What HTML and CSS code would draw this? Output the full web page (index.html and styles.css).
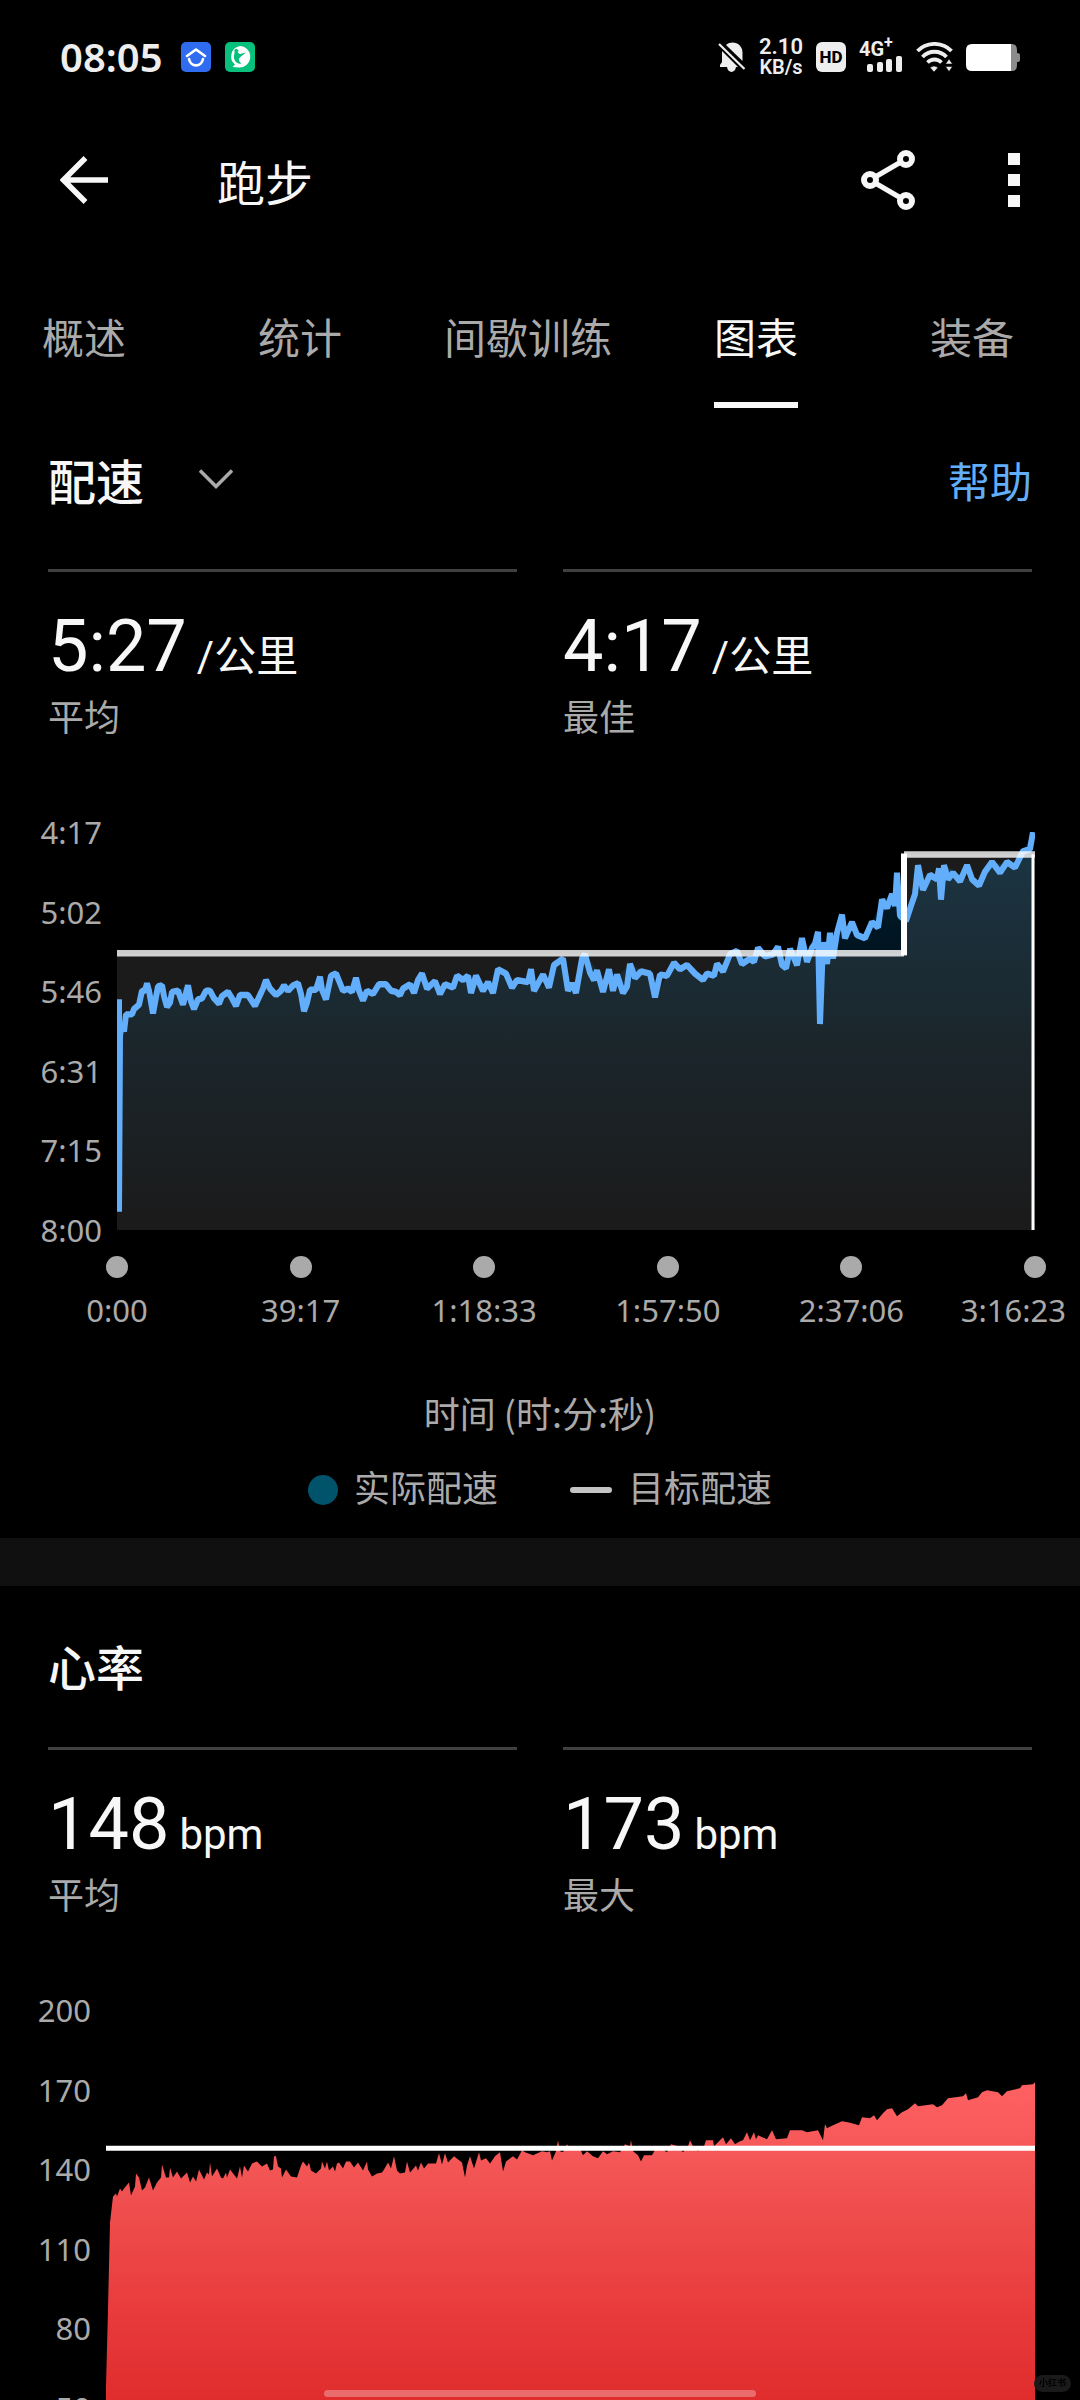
FILE: index.html
```html
<!DOCTYPE html>
<html lang="zh-CN">
<head>
  <meta charset="UTF-8">
  <meta name="viewport" content="width=device-width, initial-scale=1.0">
  <title>跑步</title>
  <link rel="stylesheet" href="styles.css">
</head>
<body>
  <div class="status-bar">
    <span class="clock">08:05</span>
    <svg class="app-icon" viewBox="0 0 30 30" width="30" height="30">
      <rect width="30" height="30" rx="5" fill="#2f6cf0"/>
      <path d="M6 14 L15 7.500 L24 14" fill="none" stroke="#fff" stroke-width="2.600" stroke-linecap="round" stroke-linejoin="round"/>
      <path d="M8 17 C9.500 25.500 20.500 25.500 22 17" fill="none" stroke="#fff" stroke-width="2.600" stroke-linecap="round"/>
    </svg>
    <svg class="app-icon" viewBox="0 0 30 30" width="30" height="30">
      <rect width="30" height="30" rx="5" fill="#06c07c"/>
      <path d="M15 4 A10.500 10.500 0 1 1 14 25.500 L7.500 25 L10 22.500 A10.500 10.500 0 0 1 15 4 Z" fill="#fff"/>
      <path d="M9.500 8 A2 2 0 1 1 12.500 10.500 L15 12 L21 10.500 L16 14.500 C13.500 16 13 19 16.500 21.500 C11 22.500 7.500 17.500 9.500 11 Z" fill="#06c07c"/>
    </svg>
    <div class="status-right">
      <svg viewBox="0 0 28 30" width="28" height="30">
        <path d="M8 3 C15 -2.500 24.500 2 24.500 10.500 V19 Z M4 9 L20 25 H18 C17 31.500 10 31.500 9 25 H2 V23 L4 20 Z" fill="#eee"/>
        <path d="M1 2 L26.500 27" stroke="#eee" stroke-width="2.200"/>
      </svg>
      <div class="net-speed"><span>2.10</span><span>KB/s</span></div>
      <span class="hd">HD</span>
      <div class="signal">
        <span>4G<sup>+</sup></span>
        <svg viewBox="0 0 36 16" width="36" height="16" fill="#eee">
          <rect x="0" y="8" width="6" height="8" rx="2"/>
          <rect x="10" y="6" width="6" height="10" rx="2"/>
          <rect x="19" y="3" width="6" height="13" rx="2"/>
          <rect x="29" y="0" width="6" height="16" rx="2"/>
        </svg>
      </div>
      <svg viewBox="0 0 37 30" width="37" height="30">
        <path d="M1.500 9 C10.500 -0.500 26.500 -0.500 35.500 9 M6.500 15 C13 8 24 8 30.500 15 M11.500 20.500 C15.500 16.500 21.500 16.500 25.500 20.500" fill="none" stroke="#eee" stroke-width="3.800"/>
        <path d="M14 25.500 Q18 22.500 22 25.500 L18 30 Z M29.500 22 L33 17 L36.500 22 Z M29.500 24.500 L33 29.500 L36.500 24.500 Z" fill="#eee" stroke="#000" stroke-width="0.500"/>
      </svg>
      <svg viewBox="0 0 54 27" width="54" height="27">
        <path d="M44 0 H46 Q51 0 51 6 V9 Q54 9 54 11 V16 Q54 18 51 18 V21 Q51 27 46 27 H44 Z" fill="#8c8c8c"/>
        <path d="M6 0 H45 V27 H6 Q0 27 0 21 V6 Q0 0 6 0 Z" fill="#fff"/>
      </svg>
    </div>
  </div>

  <header class="app-bar">
    <button class="icon-button" aria-label="返回">
      <svg viewBox="0 0 48 48" width="48" height="48">
        <path d="M25.500 2 L3.500 24 L25.500 46 M4 24 H48" fill="none" stroke="#f7f7f7" stroke-width="5.500"/>
      </svg>
    </button>
    <h1>跑步</h1>
    <button class="icon-button" aria-label="分享">
      <svg viewBox="0 0 54 60" width="54" height="60" fill="none" stroke="#f7f7f7">
        <path d="M9 30 L45 9 M9 30 L45 51" stroke-width="5"/>
        <circle cx="9" cy="30" r="6" stroke-width="6" fill="#000"/>
        <circle cx="45" cy="9" r="6" stroke-width="6" fill="#000"/>
        <circle cx="45" cy="51" r="6" stroke-width="6" fill="#000"/>
      </svg>
    </button>
    <button class="icon-button more" aria-label="更多">
      <svg viewBox="0 0 12 54" width="12" height="54" fill="#f7f7f7">
        <rect width="12" height="12"/>
        <rect y="21" width="12" height="12"/>
        <rect y="42" width="12" height="12"/>
      </svg>
    </button>
  </header>

  <nav class="tabs">
    <a href="#overview"><span>概述</span></a>
    <a href="#stats"><span>统计</span></a>
    <a href="#intervals"><span>间歇训练</span></a>
    <a href="#charts" class="active"><span>图表</span></a>
    <a href="#gear"><span>装备</span></a>
  </nav>

  <main>
    <section>
      <div class="section-head">
        <h2>配速</h2>
        <button class="icon-button" aria-label="选择图表">
          <svg viewBox="0 0 34 20" width="34" height="20">
            <path d="M1 1.500 L17 17.500 L33 1.500" fill="none" stroke="#aaa" stroke-width="3.500"/>
          </svg>
        </button>
        <a class="help" href="#help">帮助</a>
      </div>

      <div class="stats">
        <div class="stat">
          <p class="value">5:27<span class="unit">/公里</span></p>
          <p class="label">平均</p>
        </div>
        <div class="stat">
          <p class="value">4:17<span class="unit">/公里</span></p>
          <p class="label">最佳</p>
        </div>
      </div>

      <div class="chart">
        <div class="y-axis wide">
          <span>4:17</span>
          <span>5:02</span>
          <span>5:46</span>
          <span>6:31</span>
          <span>7:15</span>
          <span>8:00</span>
        </div>
        <svg class="plot" viewBox="0 0 918 371" preserveAspectRatio="none">
          <defs>
            <linearGradient id="pace-fill" gradientUnits="userSpaceOnUse" x1="0" y1="0" x2="0" y2="371">
              <stop offset="0" stop-color="#001f30"/>
              <stop offset="0.500" stop-color="#000e15"/>
              <stop offset="1" stop-color="#000"/>
            </linearGradient>
            <polyline id="pace" points="2,156 2,354 3,190 5,178 7,186 9,170 15,170 17,165 22,161 25,148 28,148 30,141 32,148 36,169 39,154 41,144 45,143 47,153 50,163 53,159 55,149 61,148 66,161 71,143 74,158 77,165 81,156 85,155 89,148 93,148 97,155 102,160 105,153 111,149 115,155 119,162 123,152 131,152 138,162 143,152 146,146 149,138 153,146 159,152 164,148 167,143 171,148 176,143 181,141 184,151 187,167 190,159 193,147 199,147 203,135 205,147 209,156 211,147 214,134 219,132 223,141 226,148 231,146 235,149 239,136 242,148 246,157 250,148 256,151 262,142 269,142 274,148 279,149 283,152 286,146 293,142 297,150 301,138 305,132 310,146 318,139 323,151 328,142 336,145 340,134 346,138 351,134 354,150 359,134 366,148 371,140 376,150 381,128 389,132 395,145 400,138 411,140 414,128 417,148 426,133 432,145 437,124 446,118 451,148 455,141 459,150 465,118 468,114 473,131 477,138 480,129 486,149 492,128 496,148 500,133 506,150 510,144 513,123 518,136 524,130 533,132 538,154 543,133 550,134 557,122 563,128 570,124 578,132 586,138 590,132 597,134 600,123 606,130 613,114 620,111 625,123 633,118 637,121 641,108 648,116 656,114 661,107 665,124 669,127 673,109 680,124 685,99 690,121 695,108 698,104 701,93 703,179 706,103 710,123 713,94 716,118 720,94 725,77 728,99 735,84 740,96 748,99 755,84 761,89 765,63 770,71 775,58 778,69 780,38 783,78 789,83 795,66 798,58 801,31 806,54 813,40 820,44 822,34 824,63 827,31 831,44 836,38 843,46 850,31 855,44 862,50 868,37 875,28 883,38 890,28 898,33 906,18 913,16 916,0"/>
            <clipPath id="under-pace">
              <path d="M0 371 L2 190 7,180 15,170 25,148 30,141 36,169 45,143 50,163 61,148 71,143 77,165 93,148 102,160 111,149 119,162 131,152 138,162 149,138 159,152 181,141 187,167 193,147 203,135 209,156 219,132 226,148 239,136 246,157 269,142 283,152 305,132 323,151 351,134 376,150 381,128 389,132 395,145 411,140 432,145 437,124 446,118 451,148 459,150 468,114 480,129 486,149 513,123 533,132 538,154 557,122 586,138 606,130 620,111 633,118 661,107 669,127 685,99 690,121 701,93 716,118 725,77 728,99 735,84 748,99 765,63 780,58 789,83 801,31 806,54 827,31 862,50 875,28 898,33 916,0 918,371 Z"/>
            </clipPath>
          </defs>
          <rect width="918" height="371" fill="url(#pace-fill)" clip-path="url(#under-pace)"/>
          <path d="M0 113 H787 V21 H918 V371 H0 Z" fill="#fff" fill-opacity="0.105"/>
          <use href="#pace" fill="none" stroke="#62aefa" stroke-width="6" stroke-linejoin="bevel"/>
          <path d="M0 113 H787 M787 21 H918" fill="none" stroke="#fff" stroke-opacity="0.800" stroke-width="6"/>
          <path d="M787 115 V20" stroke="#fff" stroke-width="6"/>
          <path d="M916 21 V371" stroke="#fff" stroke-width="3"/>
        </svg>
      </div>

      <div class="x-axis">
        <span class="tick">0:00</span>
        <span class="tick">39:17</span>
        <span class="tick">1:18:33</span>
        <span class="tick">1:57:50</span>
        <span class="tick">2:37:06</span>
        <span class="tick">3:16:23</span>
      </div>
      <p class="axis-title">时间 (时:分:秒)</p>
      <div class="legend">
        <span class="legend-dot"></span>
        <span>实际配速</span>
        <span class="legend-line"></span>
        <span>目标配速</span>
      </div>
    </section>

    <section class="heart-rate">
      <div class="section-head">
        <h2>心率</h2>
      </div>

      <div class="stats">
        <div class="stat">
          <p class="value">148<span class="unit">bpm</span></p>
          <p class="label">平均</p>
        </div>
        <div class="stat">
          <p class="value">173<span class="unit">bpm</span></p>
          <p class="label">最大</p>
        </div>
      </div>

      <div class="chart">
        <div class="y-axis">
          <span>200</span>
          <span>170</span>
          <span>140</span>
          <span>110</span>
          <span>80</span>
          <span>50</span>
        </div>
        <svg class="plot" viewBox="0 0 929 397" preserveAspectRatio="none">
          <defs>
            <linearGradient id="hr-fill" gradientUnits="userSpaceOnUse" x1="0" y1="72" x2="0" y2="389">
              <stop offset="0" stop-color="#ff6163"/>
              <stop offset="0.300" stop-color="#f25353"/>
              <stop offset="0.700" stop-color="#e93c3d"/>
              <stop offset="1" stop-color="#e02c2d"/>
            </linearGradient>
          </defs>
          <polygon fill="url(#hr-fill)" points="0,397 0,375 2,299 4,212 7,186 10,183 11,186 14,178 16,181 18,178 23,172 25,185 29,176 30,163 33,167 36,180 39,177 43,167 47,180 51,172 55,167 56,154 60,167 63,167 64,157 67,167 71,161 75,168 81,162 84,172 87,166 90,171 93,159 98,169 101,162 103,164 104,152 106,166 111,158 115,167 117,168 120,162 121,167 124,159 131,168 134,156 136,167 138,155 142,161 146,153 151,151 156,156 161,153 164,160 167,159 168,146 170,146 172,156 175,158 176,167 180,159 185,166 191,167 195,155 197,151 201,156 203,152 205,160 210,163 215,158 216,151 219,158 221,151 223,160 227,156 229,161 231,153 233,152 237,158 240,151 244,151 248,157 252,152 257,160 261,151 262,159 266,166 271,163 276,162 278,159 282,152 285,158 288,146 291,160 294,163 299,162 301,151 304,162 310,155 312,160 315,152 318,158 322,153 330,153 333,143 336,154 339,143 342,152 348,146 356,152 359,167 361,155 364,146 368,158 373,142 375,150 380,148 384,153 389,146 394,142 397,161 400,151 407,146 411,149 416,140 419,142 427,145 436,141 441,142 444,141 446,150 450,141 452,130 454,141 457,142 461,134 464,139 473,136 477,145 481,141 487,146 492,148 497,141 501,144 507,141 514,142 519,134 524,136 525,130 527,141 532,145 535,151 538,145 546,145 551,136 561,142 565,134 572,136 577,142 582,136 584,130 587,136 592,141 598,136 600,130 607,130 608,136 613,131 617,127 620,134 625,128 629,134 634,131 637,130 641,122 644,130 648,122 650,129 652,125 661,129 666,120 670,129 681,128 684,120 696,120 701,122 712,120 717,130 719,114 721,118 727,115 736,111 742,112 753,115 756,107 764,108 768,105 771,110 777,103 781,99 786,98 791,106 796,102 802,99 809,93 812,96 827,94 831,97 836,95 842,88 857,86 860,83 862,90 872,87 876,82 881,80 892,82 896,86 901,81 914,78 916,75 927,74 929,72 929,397"/>
          <path d="M0 138 H929" stroke="#fff" stroke-width="5"/>
        </svg>
      </div>
    </section>
  </main>

  <div class="home-indicator"></div>
  <span class="watermark">小红书</span>
</body>
</html>
```
FILE: styles.css
```css
* {
  box-sizing: border-box;
}

body {
  margin: 0;
  height: 100vh;
  display: flex;
  flex-direction: column;
  overflow: hidden;
  background-color: #000;
  color: #f7f7f7;
  font-family: Roboto, "Noto Sans CJK SC", sans-serif;
}

h1, h2, p {
  margin: 0;
}

a {
  color: inherit;
  text-decoration: none;
}

svg {
  display: block;
}

.status-bar {
  display: flex;
  align-items: center;
  height: 96px;
  padding: 18px 60px 0;
  color: #eee;
  flex-shrink: 0;
}

.clock {
  font-family: "Noto Sans", sans-serif;
  font-size: 40px;
  font-weight: 600;
  line-height: 40px;
  margin-right: 4px;
}

.app-icon {
  margin-left: 14px;
}

.status-right {
  display: flex;
  align-items: center;
  gap: 13px;
  margin-left: auto;
}

.net-speed {
  display: flex;
  flex-direction: column;
  align-items: center;
  font-size: 20px;
  font-weight: 600;
  line-height: 20px;
}

.net-speed span:first-child {
  font-size: 22px;
}

.hd {
  width: 30px;
  height: 30px;
  border-radius: 6px;
  background-color: #eee;
  color: #000;
  font-size: 17px;
  font-weight: 800;
  line-height: 30px;
  text-align: center;
}

.signal {
  display: flex;
  flex-direction: column;
  align-items: flex-end;
  width: 44px;
  height: 30px;
  font-size: 20px;
  font-weight: 700;
  line-height: 14px;
}

.signal span {
  align-self: flex-start;
}

.signal sup {
  font-size: 16px;
  line-height: 0;
}

.app-bar {
  display: flex;
  align-items: center;
  height: 168px;
  padding: 0 60px;
  flex-shrink: 0;
}

.app-bar h1 {
  flex: 1;
  margin-left: 109px;
  font-size: 48px;
  font-weight: 400;
}

.icon-button {
  padding: 0;
  border: 0;
  background: none;
  cursor: pointer;
}

.more {
  margin-left: 93px;
}

/* the strip is wider than a phone screen, keep its end in view */
.tabs {
  display: flex;
  justify-content: flex-end;
  height: 144px;
  overflow: hidden;
  flex-shrink: 0;
  font-size: 42px;
  color: #aaa;
}

.tabs a {
  display: flex;
  justify-content: center;
  flex-shrink: 0;
  min-width: 20%;
  padding: 0 36px;
}

.tabs span {
  height: 144px;
  padding-top: 4px;
  line-height: 144px;
}

.tabs .active span {
  color: #f7f7f7;
  border-bottom: 6px solid #f7f7f7;
}

main {
  flex: 1;
  min-height: 0;
  overflow-y: auto;
  scrollbar-width: none;
}

.section-head {
  display: flex;
  align-items: center;
  height: 142px;
  margin-bottom: 19px;
  padding: 0 48px;
}

.section-head h2 {
  margin-right: 55px;
  font-size: 48px;
  font-weight: 500;
}

.help {
  margin-left: auto;
  font-size: 42px;
  color: #62aefa;
}

.stats {
  display: grid;
  grid-template-columns: 1fr 1fr;
  gap: 46px;
  padding: 0 48px;
}

.stat {
  border-top: 3px solid #404040;
  padding-top: 33px;
}

.value {
  display: flex;
  align-items: baseline;
  gap: 10px;
  height: 84px;
  font-size: 72px;
  line-height: 84px;
}

.unit {
  font-size: 42px;
  line-height: 48px;
}

.label {
  margin-top: 6px;
  font-size: 36px;
  line-height: 48px;
  color: #aaa;
}

.chart {
  display: flex;
  margin-top: 74px;
  padding-right: 45px;
}

.y-axis {
  display: flex;
  flex-direction: column;
  justify-content: space-between;
  width: 91px;
  margin-right: 15px;
  font-family: "Noto Sans", sans-serif;
  font-size: 31px;
  line-height: 30px;
  text-align: right;
  color: #aaa;
}

.y-axis.wide {
  width: 102px;
}

.plot {
  flex: 1;
  min-width: 0;
  height: 398px;
  margin: 15px 0;
}

.x-axis {
  display: flex;
  justify-content: space-between;
  margin-top: 11px;
  padding: 0 34px 0 106px;
  font-family: "Noto Sans", sans-serif;
  font-size: 31px;
  line-height: 36px;
  color: #aaa;
}

.tick {
  display: flex;
  flex-direction: column;
  align-items: center;
  gap: 14px;
  width: 22px;
  white-space: nowrap;
}

.tick::before {
  content: "";
  width: 22px;
  height: 22px;
  border-radius: 50%;
  background-color: #aaa;
  flex-shrink: 0;
}

/* last label stays inside the screen */
.tick:last-child {
  align-items: flex-end;
  width: 42px;
  margin-right: -20px;
}

.tick:last-child::before {
  margin-right: 20px;
}

.axis-title {
  margin-top: 60px;
  font-family: "Noto Sans CJK SC", sans-serif;
  font-size: 36px;
  line-height: 48px;
  text-align: center;
  color: #aaa;
}

.legend {
  display: flex;
  justify-content: center;
  align-items: center;
  gap: 16px;
  margin-top: 30px;
  padding-bottom: 24px;
  font-size: 36px;
  line-height: 48px;
  color: #aaa;
}

.legend-dot {
  width: 30px;
  height: 30px;
  border-radius: 50%;
  background-color: #00536b;
}

.legend-line {
  width: 42px;
  height: 6px;
  margin-left: 56px;
  border-radius: 3px;
  background-color: #c4c4c5;
}

.heart-rate {
  border-top: 48px solid #101010;
}

.heart-rate .section-head {
  height: 158px;
  margin-bottom: 3px;
}

.home-indicator {
  position: fixed;
  left: 30%;
  right: 30%;
  bottom: 3px;
  height: 7px;
  border-radius: 4px;
  background-color: rgba(255, 255, 255, 0.3);
}

.watermark {
  position: fixed;
  right: 9px;
  bottom: 8px;
  padding: 0 5px;
  border-radius: 9px;
  background-color: #1a1a1a;
  color: #000;
  font-size: 9px;
  font-weight: 700;
  line-height: 17px;
}
```
